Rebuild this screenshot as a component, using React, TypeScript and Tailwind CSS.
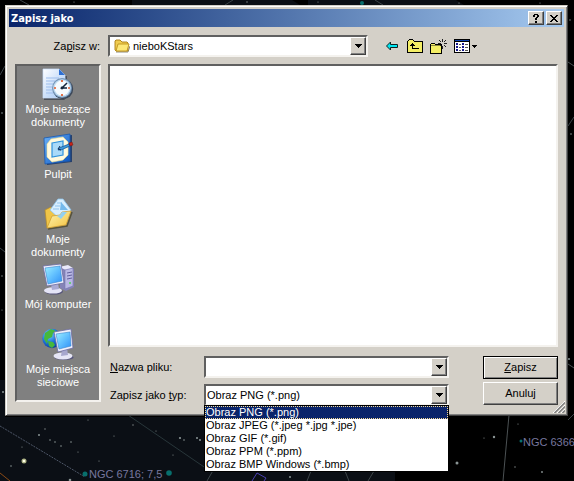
import { useState } from "react";
import type { ReactNode } from "react";

const fileTypes = [
    "Obraz PNG (*.png)",
    "Obraz JPEG (*.jpeg *.jpg *.jpe)",
    "Obraz GIF (*.gif)",
    "Obraz PPM (*.ppm)",
    "Obraz BMP Windows (*.bmp)",
];

const sunken = "border-2 border-t-[#606060] border-l-[#606060] border-r-[#f4f2ee] border-b-[#f4f2ee]";
const raised = "border border-t-white border-l-white border-r-[#404040] border-b-[#404040] bg-[#d4d0c8] shadow-[inset_-1px_-1px_0_#808080]";

function RecentIcon() {
    return (
        <svg viewBox="0 0 32 32" className="w-8 h-8" aria-hidden="true">
            <defs>
                <linearGradient id="paper" x1="0" y1="0" x2="1" y2="1">
                    <stop offset="0" stopColor="#ffffff" />
                    <stop offset="1" stopColor="#9fc4f4" />
                </linearGradient>
            </defs>
            <path d="M2 31h20l2-2V8" fill="none" stroke="#3a3f4a" strokeWidth="1.5" />
            <path d="M1 1h16l6 6v23H1z" fill="url(#paper)" stroke="#c9dcf8" strokeWidth=".7" />
            <path d="M17 1l6 6h-6z" fill="#2d6fd2" />
            <path d="M4 10h13M4 13h9M4 16h7M4 19h6M4 22h6M4 25h7" stroke="#9dbdec" strokeWidth="1" />
            <circle cx="21" cy="21" r="10.2" fill="#3b4758" />
            <circle cx="20" cy="20" r="10" fill="#7696b8" />
            <circle cx="20" cy="20" r="8.8" fill="#c3ddf2" />
            <circle cx="20" cy="20" r="7.4" fill="#f6fbff" />
            <path d="M20 12v2M20 26v2M12 20h2M26 20h2" stroke="#e0592b" strokeWidth="1.7" />
            <path d="M25 15l-5 5h5" fill="none" stroke="#14253a" strokeWidth="1.5" />
            <circle cx="20" cy="20" r="1.4" fill="#14253a" />
        </svg>
    );
}

function DesktopIcon() {
    return (
        <svg viewBox="0 0 32 32" className="w-8 h-8" aria-hidden="true">
            <defs>
                <linearGradient id="desk" x1="0" y1="0" x2="1" y2="1">
                    <stop offset="0" stopColor="#6cb2f8" />
                    <stop offset="1" stopColor="#0a54c0" />
                </linearGradient>
            </defs>
            <path d="M4 5l26-3v27L5 32z" fill="#26406c" />
            <path d="M2 5l26-4v27L3 31z" fill="url(#desk)" stroke="#1b59ae" strokeWidth=".8" />
            <path d="M9 6l12-2 5 5v13l-5 5-11 2-5-5V11z" fill="#fffae0" stroke="#f4e08c" strokeWidth=".6" />
            <path d="M10 10l11-2v14l-11 2z" fill="#a9daf9" stroke="#2f92dc" strokeWidth="1.2" />
            <path d="M17 15l10-4 1 2-9 4-3 0z" fill="#3d9ade" stroke="#124a87" strokeWidth=".7" />
            <path d="M27 10l3-1 1 3-3 1z" fill="#c52419" stroke="#7c1711" strokeWidth=".5" />
            <path d="M18 13l-2 3 3 1" fill="none" stroke="#12315b" strokeWidth="1" />
        </svg>
    );
}

function DocumentsIcon() {
    return (
        <svg viewBox="0 0 32 32" className="w-8 h-8" aria-hidden="true">
            <defs>
                <linearGradient id="folder" x1="0" y1="0" x2="1" y2="1">
                    <stop offset="0" stopColor="#fff6b4" />
                    <stop offset="1" stopColor="#f2c03c" />
                </linearGradient>
            </defs>
            <path d="M6 31l19-3 5-14" fill="none" stroke="#55523c" strokeWidth="1.6" />
            <path d="M3 12l6-3 3 3 13-2 3 4-4 12L5 30z" fill="#f0c548" stroke="#b88d24" strokeWidth=".7" />
            <path d="M16 1h5l8 11-9 11L8 12z" fill="#d8eefe" stroke="#8cc3ec" strokeWidth=".8" />
            <path d="M15 5h5M13 8h5M11 11h6" stroke="#8fc3ec" />
            <path d="M19 4l7 8h-8z" fill="#74b9ec" />
            <path d="M5 30l5-12 8-1 2-3 9-1-5 14z" fill="url(#folder)" stroke="#cc9a2b" strokeWidth=".7" />
            <path d="M15 18l3-1 2-3 5 0-6 7z" fill="#93d0f0" />
        </svg>
    );
}

function ComputerIcon() {
    return (
        <svg viewBox="0 0 32 32" className="w-8 h-8" aria-hidden="true">
            <defs>
                <linearGradient id="screen" x1="0" y1="0" x2="1" y2="1">
                    <stop offset="0" stopColor="#9df0ff" />
                    <stop offset=".5" stopColor="#62c0ff" />
                    <stop offset="1" stopColor="#2f90f6" />
                </linearGradient>
            </defs>
            <path d="M18 5l9-2 5 3v18l-8 4-6-3z" fill="#8583b8" />
            <path d="M17 4l9-2 5 3-7 2z" fill="#e9e9fa" />
            <path d="M23 7l8-2v18l-8 3z" fill="#b9b8e4" stroke="#7775ad" strokeWidth=".6" />
            <path d="M25 10l5-1M25 13l5-1M25 16l5-1" stroke="#62609c" />
            <circle cx="28" cy="20" r="1" fill="#50d056" />
            <ellipse cx="12" cy="28.600" rx="9" ry="3" fill="#56557b" />
            <ellipse cx="11" cy="27.400" rx="9" ry="3.2" fill="#e4e4f6" />
            <path d="M9 21l7-1 1 6-7 1z" fill="#aaaad3" />
            <path d="M1 3l18-2 3 19-17 3z" fill="#f0f0fc" stroke="#6c6ca2" strokeWidth=".8" />
            <path d="M3 5l15-2 2 15-14 3z" fill="url(#screen)" stroke="#3a84cc" strokeWidth=".6" />
        </svg>
    );
}

function NetworkIcon() {
    return (
        <svg viewBox="0 0 32 32" className="w-8 h-8" aria-hidden="true">
            <defs>
                <radialGradient id="globe" cx=".35" cy=".3" r=".8">
                    <stop offset="0" stopColor="#7ed4ff" />
                    <stop offset=".5" stopColor="#1e76dc" />
                    <stop offset="1" stopColor="#08328b" />
                </radialGradient>
            </defs>
            <circle cx="10" cy="10.500" r="9.700" fill="url(#globe)" />
            <path d="M3 5l6-4 5 2-3 2-1 4-4 2-1 5-3-5zM6 13l5 1 2 3-3 3-3-2zM14 3l3 2-2 3-2-2z" fill="#46b83b" />
            <ellipse cx="22" cy="29.400" rx="9.600" ry="2.600" fill="#56557b" />
            <ellipse cx="21" cy="28" rx="9.5" ry="3.4" fill="#e6e6f6" />
            <path d="M20 21l5-1 1 7-7 1z" fill="#a7a7cd" />
            <path d="M12 4l17-3 2 19-15 4z" fill="#f1f1fc" stroke="#6c6ca2" strokeWidth=".8" />
            <path d="M14 6l14-2 1 14-12 3z" fill="url(#screen)" stroke="#3a84cc" strokeWidth=".6" />
        </svg>
    );
}

function FolderIcon() {
    return (
        <svg viewBox="0 0 16 16" className="w-4 h-4" aria-hidden="true">
            <path d="M2 14h12l2-6" fill="none" stroke="#8c8c80" />
            <path d="M1 12V3l1-1h4l2 2h5l1 1v8H2z" fill="#f0cc50" stroke="#a77c12" strokeWidth=".9" />
            <path d="M2 13l2-7h11l-2 7z" fill="#fde878" stroke="#bd931e" strokeWidth=".9" />
        </svg>
    );
}

function BackIcon() {
    return (
        <svg viewBox="0 0 15 12" className="w-[15px] h-3" aria-hidden="true">
            <path d="M1.500 6l4-4v2.500H12.500v3h-7V10z" fill="#00e5f0" stroke="#102020" strokeWidth="1" />
        </svg>
    );
}

function UpIcon() {
    return (
        <svg viewBox="0 0 16 14" className="w-4 h-3.5" aria-hidden="true" shapeRendering="crispEdges">
            <path d="M0 2h1V1h1V0h4v1h1v1h9v12H0z" fill="#000" />
            <path d="M1 3V2h1V1h4v1h1v1h8v10H1z" fill="#f4ee65" />
            <path d="M5 4h1v1h1v1h1v1H6v2h6v1H5V7H3V6h1V5h1z" fill="#000" />
        </svg>
    );
}

function NewFolderIcon() {
    return (
        <svg viewBox="0 0 17 15" className="w-[17px] h-[15px]" aria-hidden="true" shapeRendering="crispEdges">
            <path d="M0 5h1V4h4v1h7v10H0z" fill="#000" />
            <path d="M1 6V5h4v1h6v8H1z" fill="#f4ee65" />
            <path d="M1 6h10v1H1z" fill="#8a8640" />
            <path d="M12 0h1v3h-1zM12 7h1v3h-1zM8 4h3v1H8zM14 4h3v1h-3z" fill="#222" />
            <path d="M9 1h1v1H9zM10 2h1v1h-1zM15 1h1v1h-1zM14 2h1v1h-1zM14 6h1v1h-1zM15 7h1v1h-1zM10 6h1v1h-1z" fill="#222" />
        </svg>
    );
}

function ViewIcon() {
    return (
        <svg viewBox="0 0 24 14" className="w-6 h-3.5" aria-hidden="true" shapeRendering="crispEdges">
            <path d="M0 0h16v14H0z" fill="#000" />
            <path d="M1 3h14v10H1z" fill="#fff" />
            <path d="M1 1h14v1H1z" fill="#0a3fb0" />
            <path d="M2 4h2v2H2zM8 4h2v2H8zM2 7h2v2H2zM8 7h2v2H8zM2 10h2v2H2zM8 10h2v2H8z" fill="#16168c" />
            <path d="M5 5h2v1H5zM11 5h3v1h-3zM5 8h2v1H5zM11 8h3v1h-3zM5 11h2v1H5zM11 11h3v1h-3z" fill="#555" />
            <path d="M18 6h5v1h-1v1h-1v1h-1V8h-1V7h-1z" fill="#000" />
        </svg>
    );
}

function DropArrow() {
    return (
        <span className={`pointer-events-none absolute right-0.5 top-0.5 bottom-0.5 w-4 flex items-center justify-center ${raised}`}>
            <svg viewBox="0 0 7 4" className="w-[7px] h-1" aria-hidden="true" shapeRendering="crispEdges">
                <path d="M0 0h7v1H6v1H5v1H4v1H3V3H2V2H1V1H0z" />
            </svg>
        </span>
    );
}

// night sky behind the dialog
const stars = [
    [39, 435, 1], [50, 440, 0.8], [45, 429, 0.7], [55, 442, 0.8], [71, 442, 0.8], [61, 446, 0.8], [78, 452, 0.6],
    [11, 466, 0.8], [88, 420, 0.6], [133, 425, 0.7], [156, 431, 0.6], [180, 438, 1.1], [184, 440, 0.8],
    [99, 461, 0.6], [131, 474, 0.6], [173, 455, 0.6], [197, 438, 1], [200, 440, 1], [22, 447, 0.6], [114, 436, 0.6],
    [494, 437, 1.2], [457, 463, 1.5], [518, 424, 0.6], [484, 438, 0.6], [515, 467, 0.7], [542, 472, 0.9], [290, 477, 1],
    [570, 20, 0.7], [571, 134, 0.8], [569, 359, 1], [2, 113, 0.8], [2, 276, 0.7], [3, 392, 1], [2, 310, 0.6],
    [247, 2, 0.7], [318, 2, 0.6], [540, 3, 0.6], [74, 2, 0.6], [459, 3, 0.6], [70, 480, 1.3],
];

function Sky() {
    return (
        <svg className="absolute inset-0 w-full h-full" viewBox="0 0 574 481" preserveAspectRatio="xMidYMid slice" aria-hidden="true">
            <path d="M132 5V0h160l8 5zM308 5V0h148l8 5zM0 380h5v37h390v64H0z" fill="#0b0f15" />
            <path d="M0 426l85 51" stroke="#4d5667" strokeDasharray="2 1" />
            <path d="M128 415l82 56" stroke="#28363a" />
            <path d="M509 415l-6 66M568 364l6 4M568 62l6 4" stroke="#4b5153" fill="none" />
            <path d="M0 473l10 8" stroke="#8a4a16" />
            <path d="M20 0l9 5M0 75l5-9M225 5l8-5M375 0l8 5M0 248l5 4M568 126l6-9M568 420l6-6M207 481l8-14M311 471l-4 10M345 471l4 10M374 471l-6 10" stroke="#3c4448" fill="none" />
            <path d="M252 481l5-8 9 5-2 3" stroke="#4a40b0" fill="none" />
            {stars.map(([x, y, r]) => (
                <circle key={`${x}-${y}`} cx={x} cy={y} r={r} fill="#8a9494" />
            ))}
            <circle cx="24" cy="461" r="2.500" fill="#aab083" />
            <circle cx="24" cy="461" r="1.300" fill="#ffffe6" />
            <circle cx="85" cy="474" r="2.500" fill="#086f6d" />
            <circle cx="169" cy="473" r="2.800" fill="#086f6d" />
            <circle cx="521" cy="441" r="1.500" fill="#086f6d" />
            <circle cx="362" cy="3" r="2" fill="#086f6d" />
            <text x="89" y="478" fill="#77779e" className="text-[11px]">NGC 6716; 7,5</text>
            <text x="523" y="446" fill="#77779e" className="text-[11px]">NGC 6366</text>
        </svg>
    );
}

function Place({ icon, children }: { icon: ReactNode; children: ReactNode }) {
    return (
        <button type="button" className="h-[65px] w-full flex flex-col items-center gap-[3px] text-white">
            {icon}
            <span className="text-center">{children}</span>
        </button>
    );
}

export default function App() {
    const [fileName, setFileName] = useState("");
    const [fileType, setFileType] = useState(fileTypes[0]);

    return (
        <div className="relative min-h-screen overflow-hidden bg-black pt-[5px] pl-[5px] pr-1.5 font-['Liberation_Sans',Arial,sans-serif] text-[11px] leading-[13px] text-black">
            <Sky />

            <div role="dialog" aria-labelledby="dialog-title" className="relative bg-[#d4d0c8] border border-t-[#d4d0c8] border-l-[#d4d0c8] border-r-[#404040] border-b-[#404040] shadow-[inset_1px_1px_0_#fff,inset_-1px_-1px_0_#808080] p-[3px] pb-[9px]">
                {/* Title bar */}
                <div className="h-[18px] flex items-center gap-0.5 px-0.5 bg-linear-to-r from-[#0a246a] to-[#a6caf0]">
                    <h1 id="dialog-title" className="flex-1 font-['DejaVu_Sans_Condensed','DejaVu_Sans',sans-serif] font-bold text-white">Zapisz jako</h1>
                    <button type="button" aria-label="Pomoc" className={`w-4 h-3.5 flex items-center justify-center ${raised}`}>
                        <svg viewBox="0 0 6 9" className="w-1.5 h-[9px]" aria-hidden="true" shapeRendering="crispEdges">
                            <path d="M1 0h4v1H1zM0 1h2v2H0zM4 1h2v2H4zM3 3h2v1H3zM2 4h2v2H2zM2 7h2v2H2z" />
                        </svg>
                    </button>
                    <button type="button" aria-label="Zamknij" className={`w-4 h-3.5 flex items-center justify-center ${raised}`}>
                        <svg viewBox="0 0 8 7" className="w-2 h-[7px]" aria-hidden="true" shapeRendering="crispEdges">
                            <path d="M0 0h2v1h1v1h2V1h1V0h2v1H7v1H6v1H5v1h1v1h1v1h1v1H6V6H5V5H3v1H2v1H0V6h1V5h1V4h1V3H2V2H1V1H0z" />
                        </svg>
                    </button>
                </div>

                {/* Folder row */}
                <div className="flex items-center pt-2 pl-1.5">
                    <label htmlFor="folder-select" className="w-[93px] pr-2 text-right">Za<u>p</u>isz w:</label>
                    <div className="relative flex-1 h-[22px]">
                        <select id="folder-select" className={`w-full h-full appearance-none bg-white pl-[23px] pr-5 outline-none ${sunken}`}>
                            <option>nieboKStars</option>
                        </select>
                        <span className="pointer-events-none absolute left-1.5 top-[3px]"><FolderIcon /></span>
                        <DropArrow />
                    </div>
                    <div className="w-[196px] pl-[17px] flex items-center gap-[7px]">
                        <button type="button" aria-label="Wstecz"><BackIcon /></button>
                        <button type="button" aria-label="W górę"><UpIcon /></button>
                        <button type="button" aria-label="Nowy folder"><NewFolderIcon /></button>
                        <button type="button" aria-label="Widok"><ViewIcon /></button>
                    </div>
                </div>

                <div className="flex items-start gap-[7px] pt-[7px] px-1.5">
                    {/* Places bar */}
                    <nav className={`w-[86px] h-[338px] shrink-0 bg-[#808080] pt-0.5 ${sunken}`}>
                        <Place icon={<RecentIcon />}>Moje bieżące<br />dokumenty</Place>
                        <Place icon={<DesktopIcon />}>Pulpit</Place>
                        <Place icon={<DocumentsIcon />}>Moje<br />dokumenty</Place>
                        <Place icon={<ComputerIcon />}>Mój komputer</Place>
                        <Place icon={<NetworkIcon />}>Moje miejsca<br />sieciowe</Place>
                    </nav>

                    <div className="flex-1 min-w-0">
                        <div className={`h-[283px] bg-white ${sunken}`} />

                        <form className="flex pt-[9px]" onSubmit={e => e.preventDefault()}>
                            <div className="flex-1 flex flex-col gap-1.5">
                                <div className="flex items-center">
                                    <label htmlFor="file-name" className="w-24 pl-0.5"><u>N</u>azwa pliku:</label>
                                    <div className="relative flex-1 h-[22px]">
                                        <input id="file-name" type="text" value={fileName} onChange={e => setFileName(e.target.value)} className={`w-full h-full bg-white pl-px pr-5 outline-none ${sunken}`} />
                                        <DropArrow />
                                    </div>
                                </div>
                                <div className="flex items-center">
                                    <label htmlFor="file-type" className="w-24 pl-0.5">Zapisz jako <u>t</u>yp:</label>
                                    <div className="relative flex-1 h-[22px]">
                                        <select id="file-type" value={fileType} onChange={e => setFileType(e.target.value)} className={`w-full h-full appearance-none bg-white pl-px pr-5 outline-none ${sunken}`}>
                                            {fileTypes.map(type => <option key={type}>{type}</option>)}
                                        </select>
                                        <DropArrow />
                                        <ul role="listbox" aria-label="Zapisz jako typ" className="absolute z-10 inset-x-0 top-[21px] border border-black bg-white">
                                            {fileTypes.map(type => (
                                                <li
                                                    key={type}
                                                    role="option"
                                                    aria-selected={type === fileType}
                                                    onClick={() => setFileType(type)}
                                                    className={`h-[13px] pl-px whitespace-nowrap ${type === fileType ? "bg-[#0a246a] text-white outline outline-dotted outline-[#f5db95] -outline-offset-1" : ""}`}
                                                >
                                                    {type}
                                                </li>
                                            ))}
                                        </ul>
                                    </div>
                                </div>
                            </div>
                            <div className="w-[109px] pl-[34px] flex flex-col gap-[3px]">
                                <button type="submit" className="h-[23px] border border-black bg-[#d4d0c8] shadow-[inset_1px_1px_0_#fff,inset_-1px_-1px_0_#808080]"><u>Z</u>apisz</button>
                                <button type="button" className={`h-[23px] ${raised}`}>Anuluj</button>
                            </div>
                        </form>
                    </div>
                </div>

                {/* Resize grip */}
                <svg viewBox="0 0 12 12" className="absolute right-0.5 bottom-0.5 w-3 h-3" aria-hidden="true">
                    <path d="M0 12L12 0M4 12l8-8M8 12l4-4" stroke="#fff" />
                    <path d="M1.500 12L12 1.500M5.500 12L12 5.500M9.500 12L12 9.500" stroke="#808080" strokeWidth="1.500" />
                </svg>
            </div>
        </div>
    );
}
